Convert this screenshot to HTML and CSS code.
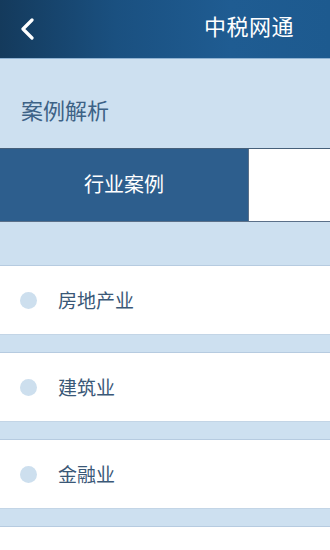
FILE: index.html
```html
<!DOCTYPE html>
<html lang="zh">
<head>
<meta charset="utf-8">
<link rel="stylesheet" href="styles.css">
</head>
<body>
<div class="app">
  <header class="topbar">
    <svg class="back" width="16" height="22" viewBox="0 0 16 22"><path d="M13 2 L4 11 L13 20" fill="none" stroke="#fff" stroke-width="3.2" stroke-linecap="round" stroke-linejoin="round"/></svg>
    <div class="title">中税网通</div>
  </header>
  <div class="section-title">案例解析</div>
  <div class="tabs">
    <div class="tab active">行业案例</div>
    <div class="tab blank"></div>
  </div>
  <div class="list">
    <div class="item"><span class="dot"></span><span class="label">房地产业</span></div>
    <div class="item"><span class="dot"></span><span class="label">建筑业</span></div>
    <div class="item"><span class="dot"></span><span class="label">金融业</span></div>
    <div class="item"><span class="dot"></span><span class="label">批发零售业</span></div>
  </div>
</div>
</body>
</html>
```

FILE: styles.css
```css
html, body {
  margin: 0;
  padding: 0;
  background: #cde0f0;
  font-family: "Noto Sans CJK SC", "Noto Sans", sans-serif;
  overflow: hidden;
}
.app {
  width: 330px;
  height: 550px;
  overflow: hidden;
  background: #cde0f0;
}
.topbar {
  height: 59px;
  border-bottom: 1px solid #8fb2d2;
  background: linear-gradient(90deg, #143a5c 0%, #1a5080 35%, #1f5c92 70%, #1d5a8f 100%);
  display: flex;
  align-items: center;
  justify-content: space-between;
  padding: 0 36px 0 19px;
  box-sizing: border-box;
}
.back {
  display: block;
  margin-top: -1px;
}
.title {
  color: #ffffff;
  font-size: 22px;
  letter-spacing: 0.5px;
  margin-top: -8px;
}
.section-title {
  height: 89px;
  box-sizing: border-box;
  padding: 36px 0 0 21px;
  font-size: 22px;
  line-height: 28px;
  color: #3d6286;
}
.tabs {
  display: flex;
  height: 74px;
  border-top: 1px solid #46607a;
  border-bottom: 1px solid #5b7089;
  box-sizing: border-box;
}
.tab {
  display: flex;
  align-items: center;
  justify-content: center;
}
.tab.active {
  width: 248px;
  background: #2d5e8d;
  color: #ffffff;
  font-size: 20px;
  padding-bottom: 3px;
  box-sizing: border-box;
}
.tab.blank {
  flex: 1;
  background: #ffffff;
  border-left: 1px solid #5b7089;
}
.list {
  padding-top: 43px;
  display: flex;
  flex-direction: column;
  gap: 17px;
}
.item {
  height: 70px;
  background: #ffffff;
  border-top: 1px solid #b6cbe0;
  border-bottom: 1px solid #c3d5e6;
  box-sizing: border-box;
  display: flex;
  align-items: center;
  padding-left: 20px;
}
.dot {
  width: 17px;
  height: 17px;
  border-radius: 50%;
  background: #cddfee;
  margin-right: 21px;
}
.label {
  font-size: 19px;
  color: #3a5877;
  margin-top: -1px;
}
```
